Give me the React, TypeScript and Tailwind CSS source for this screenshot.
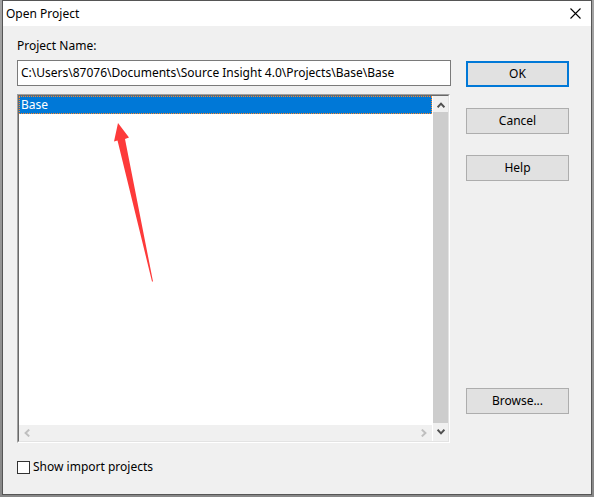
import { useState } from 'react';

type ButtonProps = { label: string; primary?: boolean };

function DialogButton({ label, primary = false }: ButtonProps) {
  return (
    <button
      type="button"
      className={
        primary
          ? 'h-[26px] w-full border-2 border-[#0078d7] bg-[#e1e1e1] text-center'
          : 'h-[26px] w-full border border-[#adadad] bg-[#e1e1e1] text-center'
      }
    >
      {label}
    </button>
  );
}

function Chevron({ className }: { className: string }) {
  return (
    <svg viewBox="0 0 8 6" className={`h-[6px] w-[8px] ${className}`} aria-hidden="true">
      <path d="M0.6 5.2 L4 1.6 L7.4 5.2" fill="none" stroke="currentColor" strokeWidth="2" />
    </svg>
  );
}

function ProjectList() {
  return (
    <div className="relative mr-px flex min-h-0 flex-1 border border-t-[#a0a0a0] border-r-white border-b-white border-l-[#a0a0a0]">
      <div className="flex flex-1 border border-t-[#696969] border-r-[#e3e3e3] border-b-[#e3e3e3] border-l-[#696969] bg-white">
        <div className="flex flex-1 flex-col">
          <ul role="listbox" aria-label="Projects" className="flex-1">
            <li
              role="option"
              aria-selected="true"
              className="mr-px h-[18px] border border-dotted border-[#ff8728] bg-[#0078d7] pl-px leading-4 text-white"
            >
              Base
            </li>
          </ul>
          <div className="mr-px flex h-4 items-center justify-between bg-[#f0f0f0] px-1 text-[#bfbfbf]">
            <Chevron className="-rotate-90" />
            <Chevron className="rotate-90" />
          </div>
        </div>
        <div className="flex w-[15px] flex-col items-center bg-[#f0f0f0] text-[#505050]">
          <div className="flex h-4 items-center pt-[2px]">
            <Chevron className="" />
          </div>
          <div className="w-full flex-1 bg-[#cdcdcd]" />
          <div className="flex h-[18px] items-center">
            <Chevron className="rotate-180" />
          </div>
        </div>
      </div>
      <svg viewBox="0 0 40 160" className="absolute top-[28px] left-[96px] h-[160px] w-[40px]" aria-hidden="true">
        <path d="M4 0 L15 14.5 L11 16 L39 158.5 L38 158.5 L3.5 17.5 L0 18.5 Z" fill="#fd3a3a" />
      </svg>
    </div>
  );
}

export default function App() {
  const [path, setPath] = useState('C:\\Users\\87076\\Documents\\Source Insight 4.0\\Projects\\Base\\Base');
  const [showImports, setShowImports] = useState(false);

  return (
    <div className="flex min-h-screen bg-gradient-to-b from-[#a3a3a3] to-[#888888] px-[2px] pb-[2px] font-['Noto_Sans',sans-serif] text-[12px] text-black">
      <main className="flex flex-1 flex-col border border-[#555555] bg-[#f0f0f0]">
        <header className="flex h-[25px] items-center justify-between bg-white pr-[10px] pl-[3px]">
          <h1>Open Project</h1>
          <button type="button" aria-label="Close">
            <svg viewBox="0 0 11 11" className="h-[11px] w-[11px]">
              <path d="M0.5 0.5 L10.5 10.5 M10.5 0.5 L0.5 10.5" stroke="#000" strokeWidth="1.1" />
            </svg>
          </button>
        </header>
        <div className="flex flex-1 gap-[15px] pt-[10px] pr-[22px] pb-[19px] pl-[14px]">
          <section className="flex flex-1 flex-col">
            <label htmlFor="name" className="h-6 leading-5">
              Project Name:
            </label>
            <input
              id="name"
              value={path}
              onChange={(e) => setPath(e.target.value)}
              className="h-[26px] w-full border border-[#7a7a7a] bg-white pr-1 pb-[2px] pl-[3px] outline-none"
            />
            <div className="mt-2 flex flex-1">
              <ProjectList />
            </div>
            <label className="mt-[16px] flex h-4 items-center gap-[3px]">
              <input
                type="checkbox"
                checked={showImports}
                onChange={(e) => setShowImports(e.target.checked)}
                className="h-[13px] w-[13px] appearance-none border border-[#333333] bg-white checked:bg-[#0078d7]"
              />
              Show import projects
            </label>
          </section>
          <aside className="flex w-[103px] flex-col gap-[21px] pt-[25px] pb-[61px]">
            <DialogButton label="OK" primary />
            <DialogButton label="Cancel" />
            <DialogButton label="Help" />
            <div className="mt-auto">
              <DialogButton label="Browse..." />
            </div>
          </aside>
        </div>
      </main>
    </div>
  );
}
